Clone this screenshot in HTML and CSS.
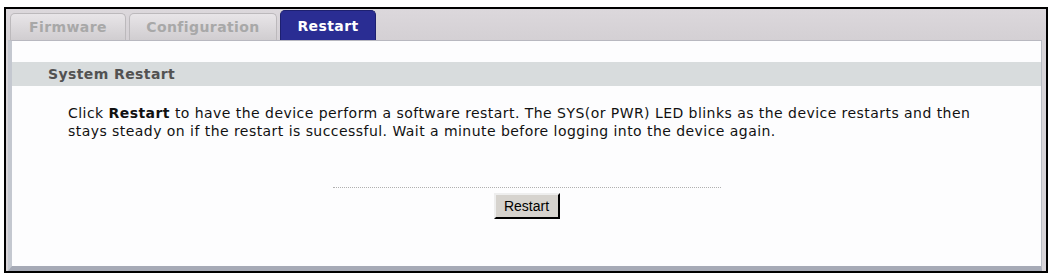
FILE: index.html
```html
<!DOCTYPE html>
<html>
<head>
<meta charset="utf-8">
<link rel="stylesheet" href="styles.css">
</head>
<body>
<div class="frame">
  <div class="tabs">
    <div class="tab">Firmware</div>
    <div class="tab">Configuration</div>
    <div class="tab active">Restart</div>
  </div>
  <div class="panel">
    <div class="section-title">System Restart</div>
    <p class="desc">Click <b>Restart</b> to have the device perform a software restart. The SYS(or PWR) LED blinks as the device restarts and then stays steady on if the restart is successful. Wait a minute before logging into the device again.</p>
    <div class="actions">
      <div class="dots"></div>
      <button class="btn">Restart</button>
    </div>
  </div>
</div>
</body>
</html>
```

FILE: styles.css
```css
html, body {
  margin: 0;
  padding: 0;
  background: #ffffff;
}
.frame {
  margin: 7px 0 0 4px;
  width: 1044px;
  height: 266px;
  box-sizing: border-box;
  border: 2px solid #000;
  background: #d7d4d8;
  display: flex;
  flex-direction: column;
  font-family: "DejaVu Sans", Verdana, sans-serif;
}
.tabs {
  display: flex;
  align-items: flex-end;
  height: 31px;
  padding-left: 4px;
  gap: 3px;
  background: linear-gradient(#dcd8dc, #d4d0d4);
}
.tab {
  height: 27px;
  box-sizing: border-box;
  display: flex;
  align-items: center;
  justify-content: center;
  font-size: 14px;
  letter-spacing: 0.4px;
  font-weight: bold;
  color: #a8a8a8;
  background: linear-gradient(#e8e5e8, #d0cdd0);
  border: 1px solid #bcb9bc;
  border-bottom: none;
  border-radius: 5px 5px 0 0;
}
.tab:first-child { width: 116px; }
.tab:nth-child(2) { width: 148px; }
.tab.active {
  width: 96px;
  height: 30px;
  color: #ffffff;
  background: #2a2d93;
  border-color: #1d2070;
}
.panel {
  flex: 1;
  margin-left: 2px;
  margin-right: 4px;
  background: #fdfdfe;
  border-top: 1px solid #b8b8c0;
  border-left: 4px solid #c4c8d0;
  border-right: 1px solid #b8bcc4;
  border-bottom: 5px solid #a6aab6;
  padding-top: 21px;
}
.section-title {
  height: 24px;
  background: #d8dcdd;
  display: flex;
  align-items: center;
  padding-left: 36px;
  font-size: 14px;
  letter-spacing: 0.4px;
  font-weight: bold;
  color: #525252;
}
.desc {
  margin: 18px 0 0 56px;
  width: 925px;
  font-size: 14px;
  letter-spacing: 0.45px;
  line-height: 18px;
  color: #111;
}
.desc b { font-weight: bold; }
.actions {
  display: flex;
  flex-direction: column;
  align-items: center;
  margin-top: 47px;
}
.dots {
  width: 388px;
  border-top: 1px dotted #b0b0b0;
}
.btn {
  margin-top: 5px;
  width: 66px;
  height: 26px;
  font-family: "Liberation Sans", Arial, sans-serif;
  font-size: 14px;
  color: #000;
  background: #d6d3ce;
  border: 2px outset #eeeeee;
  border-right-color: #404040;
  border-bottom-color: #404040;
  padding: 0;
}
```
